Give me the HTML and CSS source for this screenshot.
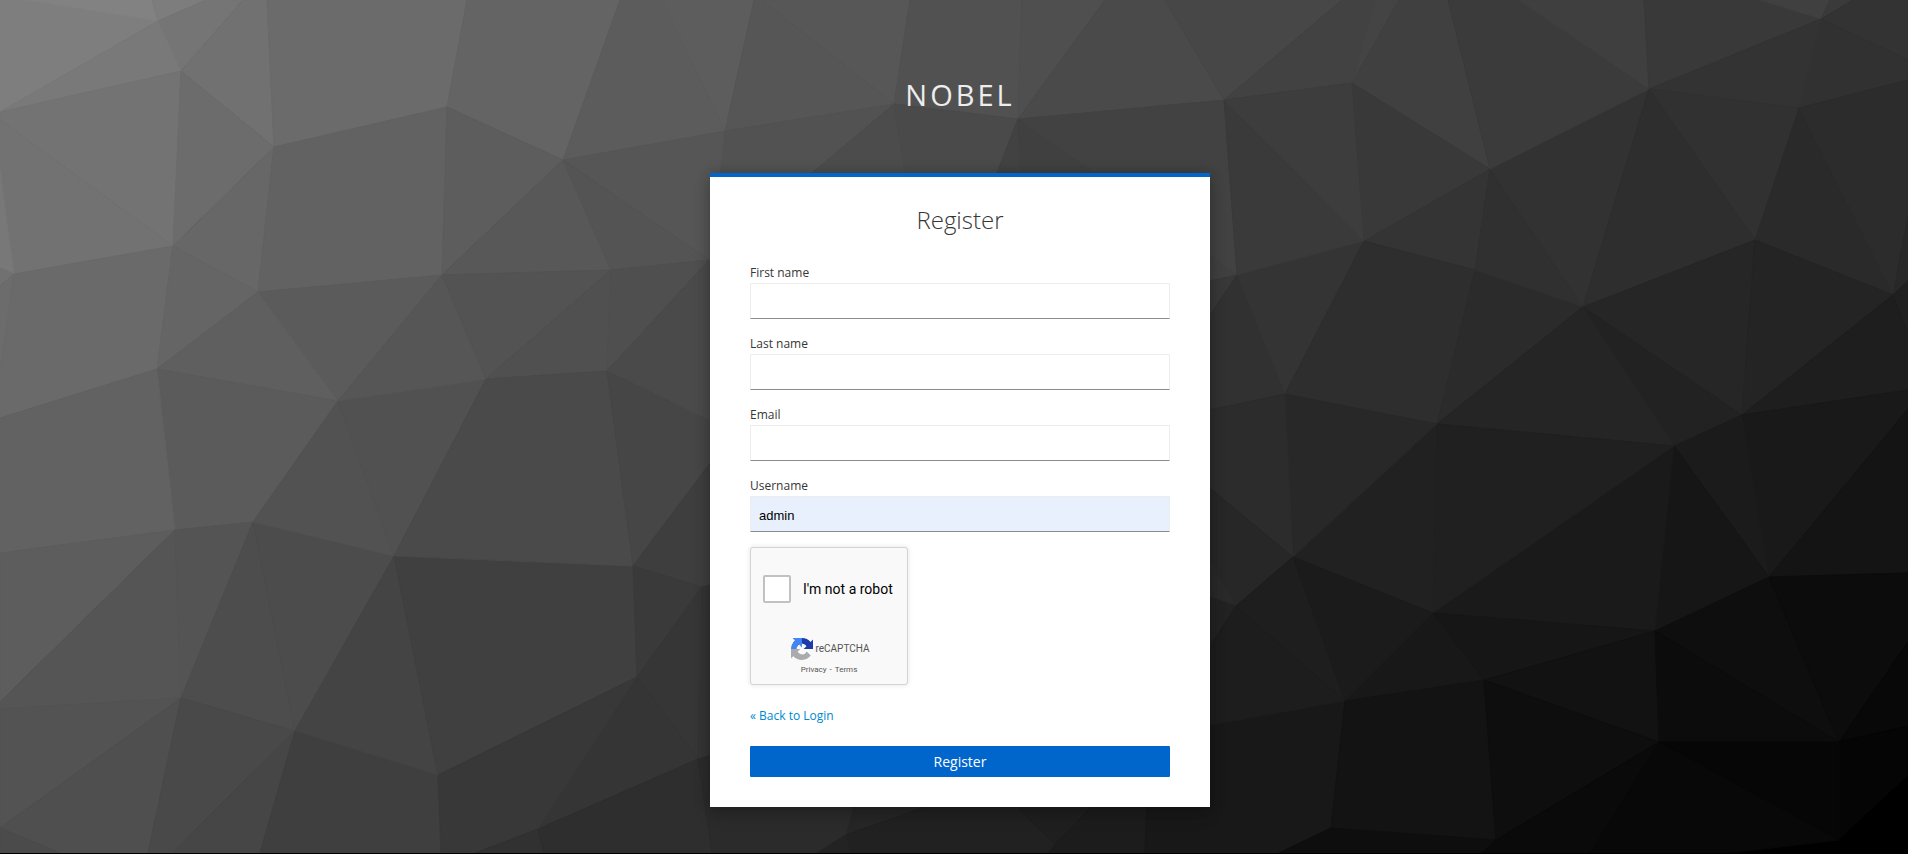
FILE: index.html
```html
<!DOCTYPE html>
<html lang="en">
<head>
<meta charset="utf-8">
<meta name="viewport" content="width=device-width, initial-scale=1">
<title>Register</title>
<link rel="stylesheet" href="styles.css">
</head>
<body class="login-page">
<svg class="backdrop" viewBox="0 0 1908 853" preserveAspectRatio="xMidYMid slice" aria-hidden="true">
<g stroke-width="1" stroke-linejoin="round">
<polygon class="g" style="--c:#7e7e7e" points="0,0 25,0 158,21 0,112"/>
<polygon class="g" style="--c:#828282" points="25,0 152,0 158,21"/>
<polygon class="g" style="--c:#7d7d7d" points="152,0 206,0 158,21"/>
<polygon class="g" style="--c:#757575" points="158,21 206,0 243,0 181,71"/>
<polygon class="g" style="--c:#797979" points="158,21 181,71 0,112"/>
<polygon class="g" style="--c:#737373" points="0,112 181,71 173,246 0,120"/>
<polygon class="g" style="--c:#727272" points="0,120 173,246 14,274 0,170"/>
<polygon class="g" style="--c:#787878" points="0,170 14,274 0,268"/>
<polygon class="g" style="--c:#717171" points="0,268 14,274 0,286"/>
<polygon class="g" style="--c:#6c6c6c" points="0,286 14,274 0,373"/>
<polygon class="g" style="--c:#6a6a6a" points="14,274 173,246 157,369 0,418 0,373"/>
<polygon class="g" style="--c:#717171" points="181,71 243,0 267,0 274,147"/>
<polygon class="g" style="--c:#6c6c6c" points="181,71 274,147 173,246"/>
<polygon class="g" style="--c:#6b6b6b" points="267,0 467,0 447,107 274,147"/>
<polygon class="g" style="--c:#676767" points="274,147 173,246 258,292"/>
<polygon class="g" style="--c:#626262" points="274,147 447,107 442,275 258,292"/>
<polygon class="g" style="--c:#656565" points="173,246 258,292 157,369"/>
<polygon class="g" style="--c:#5b5b5b" points="258,292 442,275 338,401"/>
<polygon class="g" style="--c:#5f5f5f" points="258,292 157,369 338,401"/>
<polygon class="g" style="--c:#5b5b5b" points="157,369 338,401 253,522 175,530"/>
<polygon class="g" style="--c:#626262" points="157,369 175,530 0,553 0,418"/>
<polygon class="g" style="--c:#5d5d5d" points="175,530 0,553 0,702"/>
<polygon class="g" style="--c:#555555" points="175,530 181,698 0,709 0,702"/>
<polygon class="g" style="--c:#545454" points="175,530 253,522 181,698"/>
<polygon class="g" style="--c:#4d4d4d" points="253,522 295,731 181,698"/>
<polygon class="g" style="--c:#4c4c4c" points="253,522 394,556 295,731"/>
<polygon class="g" style="--c:#525252" points="338,401 253,522 394,556"/>
<polygon class="g" style="--c:#515151" points="338,401 486,379 394,556"/>
<polygon class="g" style="--c:#565656" points="442,275 338,401 486,379"/>
<polygon class="g" style="--c:#535353" points="0,709 181,698 0,828"/>
<polygon class="g" style="--c:#4f4f4f" points="181,698 0,828 60,853 148,853"/>
<polygon class="g" style="--c:#4b4b4b" points="0,828 60,853 0,853"/>
<polygon class="g" style="--c:#494949" points="181,698 295,731 172,853 148,853"/>
<polygon class="g" style="--c:#464646" points="295,731 172,853 260,853"/>
<polygon class="g" style="--c:#3f3f3f" points="295,731 438,775 441,853 260,853"/>
<polygon class="g" style="--c:#444444" points="394,556 295,731 438,775"/>
<polygon class="g" style="--c:#404040" points="394,556 438,775 637,677 633,566"/>
<polygon class="g" style="--c:#646464" points="467,0 620,0 563,160 447,107"/>
<polygon class="g" style="--c:#5d5d5d" points="447,107 563,160 442,275"/>
<polygon class="g" style="--c:#585858" points="442,275 563,160 611,270"/>
<polygon class="g" style="--c:#5c5c5c" points="620,0 563,160 725,131 662,0"/>
<polygon class="g" style="--c:#5d5d5d" points="662,0 754,0 725,131"/>
<polygon class="g" style="--c:#565656" points="563,160 725,131 720,260 709,260"/>
<polygon class="g" style="--c:#545454" points="563,160 611,270 709,260"/>
<polygon class="g" style="--c:#535353" points="442,275 611,270 486,379"/>
<polygon class="g" style="--c:#505050" points="486,379 607,371 611,270"/>
<polygon class="g" style="--c:#4f4f4f" points="611,270 607,371 709,260"/>
<polygon class="g" style="--c:#4a4a4a" points="486,379 607,371 633,566 394,556"/>
<polygon class="g" style="--c:#4a4a4a" points="607,371 709,260 720,260 720,426 709,421"/>
<polygon class="g" style="--c:#464646" points="607,371 633,566 720,450 720,426"/>
<polygon class="g" style="--c:#3e3e3e" points="633,566 702,587 720,587 720,450"/>
<polygon class="g" style="--c:#3a3a3a" points="633,566 637,677 702,587"/>
<polygon class="g" style="--c:#363636" points="637,677 702,587 698,759"/>
<polygon class="g" style="--c:#343434" points="702,587 720,583 720,753 698,759"/>
<polygon class="g" style="--c:#353535" points="637,677 698,759 538,829"/>
<polygon class="g" style="--c:#383838" points="637,677 538,829 475,853 441,853 438,775"/>
<polygon class="g" style="--c:#313131" points="538,829 544,853 475,853"/>
<polygon class="g" style="--c:#2e2e2e" points="538,829 698,759 712,853 544,853"/>
<polygon class="g" style="--c:#2b2b2b" points="698,759 720,753 870,753 846,835 817,853 712,853"/>
<polygon class="g" style="--c:#262626" points="870,759 1060,759 846,835"/>
<polygon class="g" style="--c:#212121" points="846,835 1060,759 971,759 1055,845 1049,853 851,853"/>
<polygon class="g" style="--c:#232323" points="846,835 851,853 817,853"/>
<polygon class="g" style="--c:#1f1f1f" points="971,759 1055,845 1137,759"/>
<polygon class="g" style="--c:#1c1c1c" points="1055,845 1137,759 1149,759 1145,853 1049,853"/>
<polygon class="g" style="--c:#181818" points="1149,759 1210,725 1345,701 1331,828 1279,853 1145,853"/>
<polygon class="g" style="--c:#565656" points="754,0 762,0 894,104 725,131"/>
<polygon class="g" style="--c:#575757" points="762,0 910,0 894,104"/>
<polygon class="g" style="--c:#515151" points="910,0 1022,0 1018,119 894,104"/>
<polygon class="g" style="--c:#4f4f4f" points="1022,0 1105,0 1018,119"/>
<polygon class="g" style="--c:#4a4a4a" points="1105,0 1165,0 1224,100 1018,119"/>
<polygon class="g" style="--c:#474747" points="1165,0 1224,100 1342,0"/>
<polygon class="g" style="--c:#424242" points="1224,100 1342,0 1375,0 1352,83"/>
<polygon class="g" style="--c:#444444" points="1352,83 1375,0 1399,0"/>
<polygon class="g" style="--c:#404040" points="1352,83 1399,0 1448,0 1490,169"/>
<polygon class="g" style="--c:#525252" points="725,131 894,104 800,183 719,183"/>
<polygon class="g" style="--c:#4c4c4c" points="894,104 907,183 800,183"/>
<polygon class="g" style="--c:#4a4a4a" points="894,104 1018,119 993,183 907,183"/>
<polygon class="g" style="--c:#424242" points="1018,119 1021,183 993,183"/>
<polygon class="g" style="--c:#404040" points="1018,119 1237,275 1200,284 1021,183"/>
<polygon class="g" style="--c:#424242" points="1018,119 1224,100 1237,275"/>
<polygon class="g" style="--c:#383838" points="1237,275 1200,283 1200,330"/>
<polygon class="g" style="--c:#313131" points="1237,275 1285,394 1200,412 1200,330"/>
<polygon class="g" style="--c:#343434" points="1237,275 1364,241 1285,394"/>
<polygon class="g" style="--c:#3a3a3a" points="1224,100 1237,275 1364,241"/>
<polygon class="g" style="--c:#3d3d3d" points="1224,100 1352,83 1364,241"/>
<polygon class="g" style="--c:#393939" points="1352,83 1490,169 1364,241"/>
<polygon class="g" style="--c:#343434" points="1490,169 1364,241 1475,270"/>
<polygon class="g" style="--c:#2e2e2e" points="1364,241 1285,394 1437,424 1475,270"/>
<polygon class="g" style="--c:#2b2b2b" points="1475,270 1437,424 1583,307"/>
<polygon class="g" style="--c:#303030" points="1490,169 1475,270 1583,307"/>
<polygon class="g" style="--c:#323232" points="1490,169 1649,89 1583,307"/>
<polygon class="g" style="--c:#3b3b3b" points="1490,169 1448,0 1518,0 1649,89"/>
<polygon class="g" style="--c:#3f3f3f" points="1518,0 1644,0 1649,89"/>
<polygon class="g" style="--c:#393939" points="1644,0 1760,0 1821,19 1649,89"/>
<polygon class="g" style="--c:#404040" points="1760,0 1830,0 1821,19"/>
<polygon class="g" style="--c:#3a3a3a" points="1821,19 1830,0 1853,0"/>
<polygon class="g" style="--c:#333333" points="1821,19 1853,0 1908,0 1908,60"/>
<polygon class="g" style="--c:#313131" points="1821,19 1908,60 1908,80 1799,108"/>
<polygon class="g" style="--c:#333333" points="1649,89 1821,19 1799,108"/>
<polygon class="g" style="--c:#313131" points="1649,89 1799,108 1755,240"/>
<polygon class="g" style="--c:#2e2e2e" points="1649,89 1755,240 1583,307"/>
<polygon class="g" style="--c:#2a2a2a" points="1799,108 1755,240 1893,295"/>
<polygon class="g" style="--c:#2c2c2c" points="1799,108 1893,295 1908,217 1908,80"/>
<polygon class="g" style="--c:#282828" points="1893,295 1908,217 1908,281"/>
<polygon class="g" style="--c:#202020" points="1893,295 1908,281 1908,335"/>
<polygon class="g" style="--c:#262626" points="1755,240 1583,307 1742,415"/>
<polygon class="g" style="--c:#242424" points="1755,240 1742,415 1893,295"/>
<polygon class="g" style="--c:#222222" points="1583,307 1742,415 1674,446"/>
<polygon class="g" style="--c:#252525" points="1583,307 1674,446 1437,424"/>
<polygon class="g" style="--c:#1e1e1e" points="1742,415 1893,295 1908,335 1908,390"/>
<polygon class="g" style="--c:#191919" points="1742,415 1908,390 1908,409 1769,577"/>
<polygon class="g" style="--c:#141414" points="1908,409 1769,577 1908,573"/>
<polygon class="g" style="--c:#1b1b1b" points="1674,446 1742,415 1769,577"/>
<polygon class="g" style="--c:#161616" points="1674,446 1769,577 1655,631"/>
<polygon class="g" style="--c:#1a1a1a" points="1674,446 1655,631 1433,613"/>
<polygon class="g" style="--c:#202020" points="1437,424 1674,446 1433,613"/>
<polygon class="g" style="--c:#212121" points="1293,557 1437,424 1433,613"/>
<polygon class="g" style="--c:#282828" points="1285,394 1437,424 1293,557"/>
<polygon class="g" style="--c:#2c2c2c" points="1285,394 1293,557 1200,480 1200,412"/>
<polygon class="g" style="--c:#272727" points="1293,557 1236,606 1200,543 1200,480"/>
<polygon class="g" style="--c:#292929" points="1236,606 1200,543 1200,594"/>
<polygon class="g" style="--c:#222222" points="1236,606 1200,594 1200,661"/>
<polygon class="g" style="--c:#1d1d1d" points="1236,606 1345,701 1200,727 1200,661"/>
<polygon class="g" style="--c:#1e1e1e" points="1293,557 1236,606 1345,701"/>
<polygon class="g" style="--c:#1b1b1b" points="1293,557 1345,701 1433,613"/>
<polygon class="g" style="--c:#181818" points="1345,701 1433,613 1484,680"/>
<polygon class="g" style="--c:#161616" points="1433,613 1655,631 1484,680"/>
<polygon class="g" style="--c:#131313" points="1345,701 1484,680 1496,840 1331,828"/>
<polygon class="g" style="--c:#0e0e0e" points="1331,828 1496,840 1482,853 1279,853"/>
<polygon class="g" style="--c:#121212" points="1484,680 1655,631 1659,742"/>
<polygon class="g" style="--c:#0e0e0e" points="1484,680 1659,742 1496,840"/>
<polygon class="g" style="--c:#0e0e0e" points="1655,631 1769,577 1839,742"/>
<polygon class="g" style="--c:#0c0c0c" points="1655,631 1659,742 1839,742"/>
<polygon class="g" style="--c:#0c0c0c" points="1769,577 1839,742 1908,642 1908,573"/>
<polygon class="g" style="--c:#080808" points="1839,742 1908,642 1908,726"/>
<polygon class="g" style="--c:#050505" points="1839,742 1908,726 1908,776 1839,840"/>
<polygon class="g" style="--c:#000000" points="1839,840 1908,776 1908,853 1730,853"/>
<polygon class="g" style="--c:#060606" points="1659,742 1839,742 1839,840"/>
<polygon class="g" style="--c:#080808" points="1659,742 1839,840 1730,853 1590,853"/>
<polygon class="g" style="--c:#0a0a0a" points="1659,742 1590,853 1482,853 1496,840"/>
</g>
</svg>
<div class="page">
  <header class="brand">Nobel</header>
  <main class="card">
    <h1 class="card-title">Register</h1>
    <form class="form">
      <div class="field">
        <label for="firstName">First name</label>
        <input type="text" id="firstName" name="firstName">
      </div>
      <div class="field">
        <label for="lastName">Last name</label>
        <input type="text" id="lastName" name="lastName">
      </div>
      <div class="field">
        <label for="email">Email</label>
        <input type="text" id="email" name="email">
      </div>
      <div class="field">
        <label for="username">Username</label>
        <input class="autofilled" type="text" id="username" name="username" value="admin">
      </div>
      <div class="captcha">
        <div class="captcha-check">
          <input type="checkbox" id="robot">
          <label for="robot">I'm not a robot</label>
        </div>
        <div class="captcha-brand">
          <svg class="captcha-logo" viewBox="0 0 64 64" aria-hidden="true">
            <path fill="#1c3aa9" d="M64 31.955l-.033-1.37V4.687l-7.16 7.16C50.948 4.674 42.033.093 32.05.093c-10.4 0-19.622 4.96-25.458 12.64l11.736 11.86a15.55 15.55 0 0 1 4.754-5.334c2.05-1.6 4.952-2.906 8.968-2.906.485 0 .86.057 1.135.163 4.976.393 9.288 3.14 11.828 7.124l-8.307 8.307L64 31.953"/>
            <path fill="#4285f4" d="M31.862.094l-1.37.033H4.594l7.16 7.16C4.58 13.147 0 22.06 0 32.046c0 10.4 4.96 19.622 12.64 25.458L24.5 45.768a15.55 15.55 0 0 1-5.334-4.754c-1.6-2.05-2.906-4.952-2.906-8.968 0-.485.057-.86.163-1.135.393-4.976 3.14-9.288 7.124-11.828l8.307 8.307L31.86.095"/>
            <path fill="#ababab" d="M.001 32.045l.033 1.37v25.898l7.16-7.16c5.86 7.173 14.774 11.754 24.76 11.754 10.4 0 19.622-4.96 25.458-12.64l-11.736-11.86a15.55 15.55 0 0 1-4.754 5.334c-2.05 1.6-4.952 2.906-8.968 2.906-.485 0-.86-.057-1.135-.163-4.976-.393-9.288-3.14-11.828-7.124l8.307-8.307c-10.522.04-22.4.066-27.295-.005"/>
          </svg>
          <span>reCAPTCHA</span>
        </div>
        <div class="captcha-links"><a href="#privacy">Privacy</a><span>-</span><a href="#terms">Terms</a></div>
      </div>
      <a class="back" href="#login">« Back to Login</a>
      <button class="submit" type="submit">Register</button>
    </form>
  </main>
</div>
</body>
</html>
```
FILE: styles.css
```css
* {
  box-sizing: border-box;
}

.login-page {
  margin: 0;
  min-height: 100vh;
  background: #000;
  color: #363636;
  font: 12px/20px "Open Sans", sans-serif;
}

.backdrop {
  position: absolute;
  top: 0;
  left: 0;
  width: 100%;
  height: calc(100% - 1px);
}

.g {
  fill: var(--c);
  stroke: var(--c);
}

.page {
  position: relative;
  display: flex;
  flex-direction: column;
  align-items: center;
  padding: 75px 0 40px 12px;
}

.brand {
  margin-bottom: 58px;
  color: #ededed;
  font-size: 29px;
  line-height: 40px;
  letter-spacing: 3px;
  text-transform: uppercase;
}

.card {
  width: 100%;
  max-width: 500px;
  padding: 27px 40px 30px;
  border-top: 4px solid #06c;
  background: #fff;
  box-shadow: 0 8px 16px rgba(3, 3, 3, 0.16), 0 0 12px rgba(3, 3, 3, 0.2);
}

.card-title {
  margin: 0 0 27px;
  font-size: 24px;
  font-weight: 300;
  line-height: 32px;
  text-align: center;
}

.form {
  display: flex;
  flex-direction: column;
}

.field {
  display: flex;
  flex-direction: column;
  margin-bottom: 15px;
}

.field label {
  color: #363636;
}

.field input {
  width: 100%;
  height: 36px;
  padding: 2px 8px 0;
  border: 1px solid #ededed;
  border-bottom-color: #8a8d90;
  border-radius: 0;
  background: #fff;
  color: #000;
  font: 13px/20px "Liberation Sans", sans-serif;
}

.field .autofilled {
  background: #e8f0fe;
}

.captcha {
  display: flex;
  flex-direction: column;
  align-items: center;
  width: 158px;
  height: 138px;
  padding: 27px 12px 0;
  border: 1px solid #d3d3d3;
  border-radius: 3px;
  background: #f9f9f9;
  box-shadow: 0 0 4px 1px rgba(0, 0, 0, 0.08);
  font-family: Roboto, sans-serif;
}

.captcha-check {
  display: flex;
  align-items: center;
  gap: 12px;
  width: 100%;
  margin-bottom: 35px;
}

.captcha-check input {
  appearance: none;
  flex: none;
  width: 28px;
  height: 28px;
  margin: 0;
  border: 2px solid #c1c1c1;
  border-radius: 2px;
  background: #fff;
}

.captcha-check label {
  color: #000;
  font-size: 14px;
  line-height: 20px;
  white-space: nowrap;
}

.captcha-brand {
  display: flex;
  align-items: center;
  gap: 2px;
  padding-left: 3px;
  color: #555;
  font-size: 10px;
  line-height: 20px;
}

.captcha-logo {
  width: 22px;
  height: 22px;
}

.captcha-links {
  display: flex;
  gap: 3px;
  color: #555;
  font-size: 8px;
  line-height: 20px;
}

.captcha-links a {
  color: #555;
  text-decoration: none;
}

.back {
  align-self: flex-start;
  margin: 21px 0 20px;
  color: #0088ce;
  text-decoration: none;
}

.submit {
  height: 31px;
  padding: 0 8px;
  border: 0;
  border-radius: 1px;
  background: #06c;
  color: #fff;
  font: 14px/20px "Open Sans", sans-serif;
}
```
